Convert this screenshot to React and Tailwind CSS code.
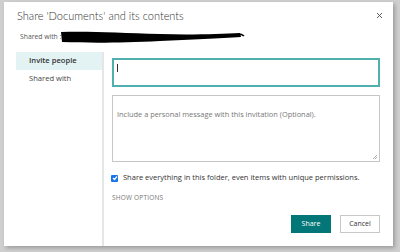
import { X } from 'lucide-react'

const font = { fontFamily: '"Open Sans", "Noto Sans", sans-serif' }

export default function App() {
  return (
    <div className="w-[400px] h-[252px] bg-[#cfcfcf] pt-[2px] pl-[4px] overflow-hidden" style={font}>
      <div className="w-[389px] h-[244px] bg-white shadow-[2px_2px_4px_rgba(0,0,0,0.25)] flex flex-col">
        {/* Header */}
        <div className="flex items-start justify-between pl-[13px] pr-[9px] pt-[6px]">
          <h1 className="text-[11px] font-light text-[#333] leading-[16px] font-['Lato',sans-serif]">Share 'Documents' and its contents</h1>
          <button className="mt-[3px] text-[#555]"><X size={9} strokeWidth={2.5} /></button>
        </div>
        <div className="flex items-center pl-[16px] mt-[6px] h-[14px]">
          <span className="text-[6.8px] text-[#555]">Shared with :</span>
          <svg width="185" height="14" viewBox="0 0 185 14" className="-ml-[1px]">
            <path d="M1 2 C30 1 60 3 100 4 C130 5 160 4 180 3 L181 7 C160 8 130 10 100 11 C60 13 30 13 2 12 Z" fill="#000" />
            <path d="M178 4 C182 4 183 5 184 6" stroke="#000" strokeWidth="1.5" fill="none" />
          </svg>
        </div>

        <div className="flex flex-1 mt-[8px] pl-[12px]">
          {/* Sidebar */}
          <div className="w-[88px] border-r-2 border-[#e6e6e6] flex flex-col">
            <div className="bg-[#e3f3f4] h-[18px] flex items-center pl-[13px] text-[7.6px] text-[#333] font-semibold">Invite people</div>
            <div className="h-[18px] flex items-center pl-[13px] text-[7.6px] text-[#444]">Shared with</div>
          </div>

          {/* Main */}
          <div className="flex-1 pl-[8px] pr-[13px] pt-[6px] pb-[7px] flex flex-col">
            <div className="h-[29px] border-2 border-[#4fb0ae] relative">
              <div className="absolute left-[3px] top-[4px] w-px h-[8px] bg-[#333]" />
            </div>
            <div className="h-[67px] mt-[8px] border border-[#c6c6c6] px-[4px] pt-[3px] relative">
              <span className="text-[7.4px] text-[#777]">Include a personal message with this invitation (Optional).</span>
              <svg width="6" height="6" viewBox="0 0 6 6" className="absolute right-[1px] bottom-[1px]">
                <path d="M5 1 L1 5 M5 3 L3 5" stroke="#999" strokeWidth="0.8" />
              </svg>
            </div>
            <div className="flex items-center h-[10px] mt-[11px] -ml-[1px]">
              <div className="w-[7px] h-[7px] bg-[#1a73e8] rounded-[1px] flex items-center justify-center">
                <svg width="6" height="6" viewBox="0 0 6 6"><path d="M1 3 L2.5 4.5 L5 1.5" stroke="#fff" strokeWidth="1.2" fill="none" /></svg>
              </div>
              <span className="ml-[5px] text-[7.5px] text-[#333] whitespace-nowrap">Share everything in this folder, even items with unique permissions.</span>
            </div>
            <div className="h-[10px] flex items-center mt-[10px] text-[6.5px] text-[#777] tracking-[0.2px]">SHOW OPTIONS</div>
            <div className="flex justify-end gap-[9px] mt-[12px]">
              <button className="w-[40px] h-[18px] bg-[#037777] text-white text-[7px]">Share</button>
              <button className="w-[40px] h-[18px] border border-[#c8c8c8] bg-white text-[#333] text-[7px]">Cancel</button>
            </div>
          </div>
        </div>
      </div>
    </div>
  )
}
